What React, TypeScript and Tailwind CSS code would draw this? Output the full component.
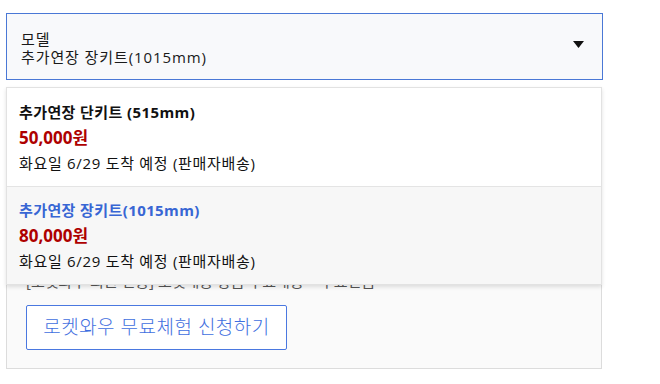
const options = [
  {
    name: "추가연장 단키트 (515mm)",
    price: "50,000",
    delivery: "화요일 6/29 도착 예정 (판매자배송)",
    selected: false,
  },
  {
    name: "추가연장 장키트(1015mm)",
    price: "80,000",
    delivery: "화요일 6/29 도착 예정 (판매자배송)",
    selected: true,
  },
];

export default function App() {
  return (
    <div
      className="relative w-[660px] h-[384px] bg-white text-[#111]"
      style={{ fontFamily: '"Open Sans", "Noto Sans CJK KR", sans-serif' }}
    >
      <div className="pt-[13px] pl-[6px] w-[603px]">
        {/* select box */}
        <div className="h-[67px] border border-[#4a78d6] bg-[#f8f9fb] flex items-center justify-between pl-[14px] pr-[18px]">
          <div className="flex flex-col text-[15px] leading-[18px] tracking-[0.9px] text-[#1a1a1a] pt-[2px]">
            <span>모델</span>
            <span>추가연장 장키트(1015mm)</span>
          </div>
          <svg width="11" height="7" viewBox="0 0 11 7" className="mt-[-4px]">
            <path d="M0 0 L11 0 L5.5 7 Z" fill="#111" />
          </svg>
        </div>

        {/* card below the menu */}
        <div className="mt-[8px] h-[281px] w-[596px] border border-[#dcdcdc] bg-[#fafafa] flex flex-col justify-end px-[19px] pb-[18px]">
          <p className="text-[15px] leading-[20px] text-[#555] mb-[14px]">
            [로켓와우 회원 전용] 로켓배송 상품 무료배송 + 무료반품
          </p>
          <button className="w-[261px] h-[45px] border border-[#4a78e0] rounded-[2px] bg-white text-[#3f6fe0] text-[19px] tracking-[0.5px] font-light">
            로켓와우 무료체험 신청하기
          </button>
        </div>
      </div>

      {/* dropdown menu */}
      <div className="absolute top-[87px] left-[6px] w-[596px] border border-[#e2e2e2] bg-white shadow-[0_2px_4px_rgba(0,0,0,0.12)]">
        {options.map((o, i) => (
          <div
            key={o.name}
            className={`px-[12px] pb-[12px] ${i === 0 ? "pt-[14px] bg-white" : "pt-[13px] bg-[#f7f7f7] border-t border-[#e4e4e4]"}`}
          >
            <div
              className={`text-[15px] leading-[20px] tracking-[0.4px] font-bold ${o.selected ? "text-[#3866d4]" : "text-[#111]"}`}
            >
              {o.name}
            </div>
            <div className="mt-[4px] text-[17px] leading-[24px] font-bold text-[#ae0000]">
              {o.price}원
            </div>
            <div className="mt-[2px] text-[15px] leading-[22px] tracking-[0.7px] text-[#111]">
              {o.delivery}
            </div>
          </div>
        ))}
      </div>
    </div>
  );
}
